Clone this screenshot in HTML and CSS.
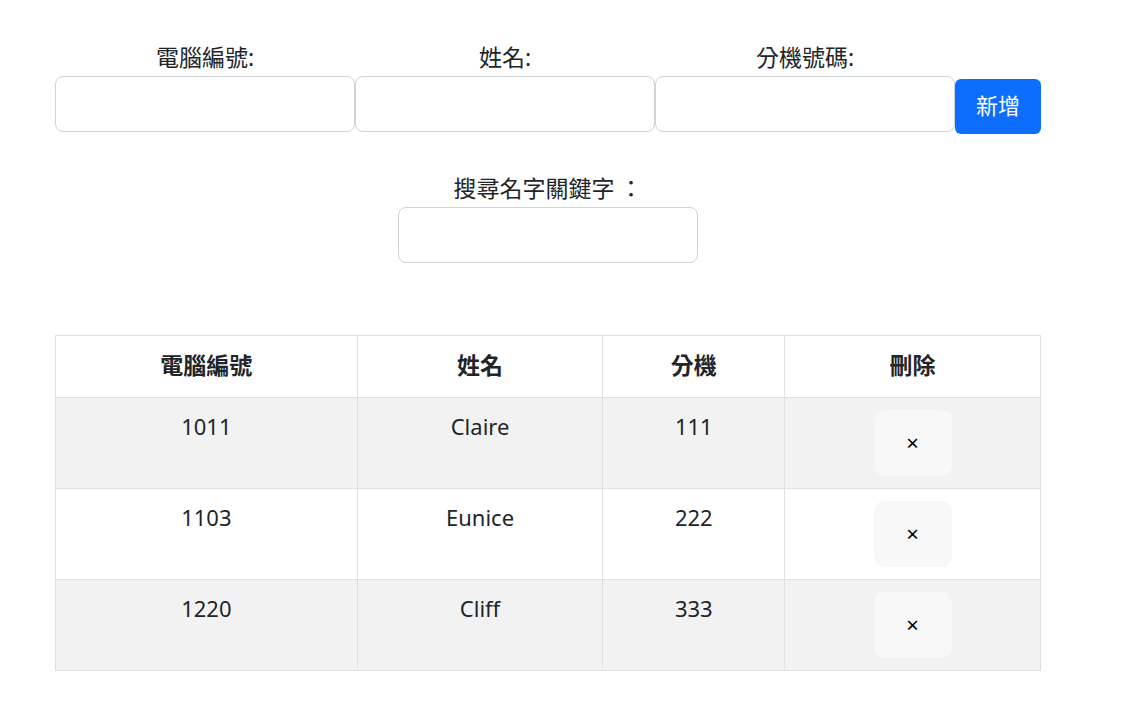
FILE: index.html
```html
<!DOCTYPE html>
<html lang="zh-Hant">
<head>
<meta charset="utf-8">
<link rel="stylesheet" href="styles.css">
</head>
<body>
<div class="page">
  <div class="add-row">
    <div class="field">
      <label class="label">電腦編號:</label>
      <input class="input" type="text">
    </div>
    <div class="field">
      <label class="label">姓名:</label>
      <input class="input" type="text">
    </div>
    <div class="field">
      <label class="label">分機號碼:</label>
      <input class="input" type="text">
    </div>
    <button class="btn-add">新增</button>
  </div>
  <div class="search">
    <label class="label">搜尋名字關鍵字<span class="colon">：</span></label>
    <input class="input" type="text">
  </div>
  <table class="table">
    <thead>
      <tr><th class="c1">電腦編號</th><th class="c2">姓名</th><th class="c3">分機</th><th class="c4">刪除</th></tr>
    </thead>
    <tbody>
      <tr class="odd"><td>1011</td><td>Claire</td><td>111</td><td class="del"><button class="btn-del">×</button></td></tr>
      <tr><td>1103</td><td>Eunice</td><td>222</td><td class="del"><button class="btn-del">×</button></td></tr>
      <tr class="odd"><td>1220</td><td>Cliff</td><td>333</td><td class="del"><button class="btn-del">×</button></td></tr>
    </tbody>
  </table>
</div>
</body>
</html>
```
FILE: styles.css
```css
* { box-sizing: border-box; }
body {
  margin: 0;
  font-family: "Noto Sans", "Noto Sans CJK TC", sans-serif;
  color: #212529;
  background: #fff;
}
.page {
  width: 986px;
  margin-left: 55px;
  padding-top: 42px;
}
.add-row {
  display: flex;
  align-items: flex-end;
}
.field {
  display: flex;
  flex-direction: column;
  align-items: center;
  width: 300px;
}
.label {
  font-size: 23px;
  line-height: 30px;
  padding-bottom: 4px;
  color: #212529;
}
.colon {
  display: inline-block;
  padding-left: 5px;
}
.input {
  width: 300px;
  height: 56px;
  border: 1px solid #ced4da;
  border-radius: 8px;
  background: #fff;
  font-size: 20px;
  padding: 0 12px;
  outline: none;
}
.btn-add {
  width: 86px;
  height: 55px;
  margin-bottom: -2px;
  background: #0d6efd;
  color: #fff;
  border: none;
  border-radius: 6px;
  font-family: "Noto Sans CJK TC", sans-serif;
  font-size: 22px;
  padding: 0 0 5px;
}
.search {
  display: flex;
  flex-direction: column;
  align-items: center;
  margin-top: 41px;
}
.table {
  margin-top: 72px;
  width: 986px;
  border-collapse: collapse;
  font-size: 22px;
}
.table th, .table td {
  border: 1px solid #dee2e6;
  text-align: center;
  vertical-align: top;
}
.table th {
  height: 62px;
  vertical-align: middle;
  font-size: 23px;
  font-weight: 700;
  padding: 0 0 5px;
}
.c1 { width: 302px; }
.c2 { width: 246px; }
.c3 { width: 182px; }
.c4 { width: 256px; }
.table td {
  padding: 10px 8px 14px;
  line-height: 36px;
  height: 91px;
}
.table td.del { padding-top: 12px; padding-bottom: 12px; }
.table tr.odd td { background: #f2f2f2; }
.btn-del {
  width: 78px;
  height: 66px;
  border: none;
  border-radius: 10px;
  background: #f8f8f8;
  font-family: "Noto Sans", sans-serif;
  font-size: 22px;
  color: #000;
  padding: 0 0 2px;
  vertical-align: top;
}
```
